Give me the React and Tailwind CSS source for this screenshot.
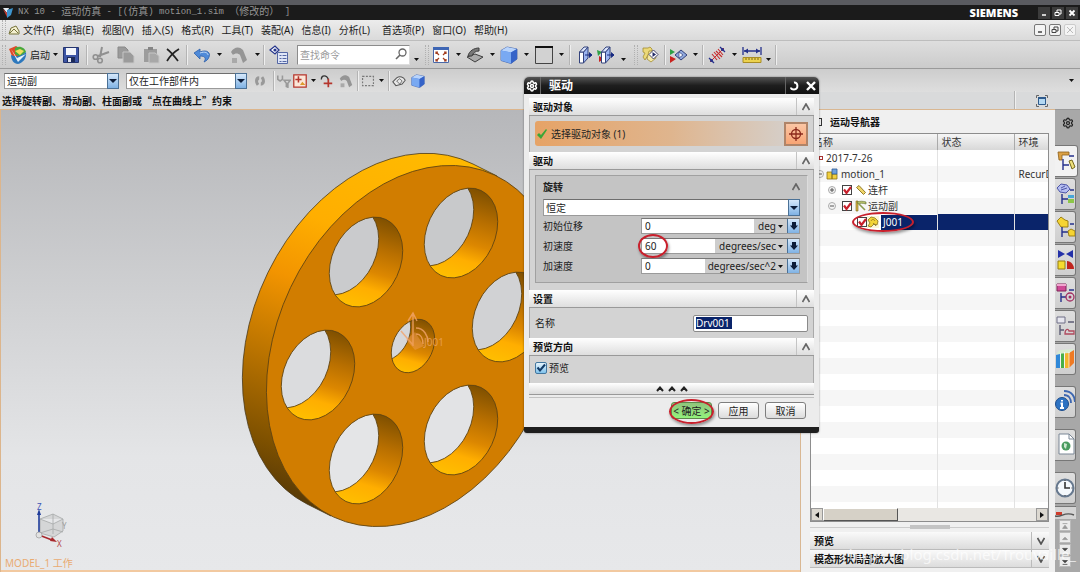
import React from "react";
import { Settings } from "lucide-react";

const MENUS = ["文件(F)", "编辑(E)", "视图(V)", "插入(S)", "格式(R)", "工具(T)", "装配(A)", "信息(I)", "分析(L)", "首选项(P)", "窗口(O)", "帮助(H)"];

/* ---------- small shared pieces ---------- */

function Svg({ size = "h-[18px] w-[18px]", box = "0 0 18 18", children }) {
  return (
    <svg className={`shrink-0 ${size}`} viewBox={box} fill="none" aria-hidden="true">
      {children}
    </svg>
  );
}

function Tool({ label, className = "", children }) {
  return (
    <button type="button" aria-label={label} className={`flex shrink-0 items-center justify-center ${className}`}>
      {children}
    </button>
  );
}

function Caret({ className = "" }) {
  return (
    <Svg size={`h-[3px] w-[5px] ${className}`} box="0 0 5 3">
      <path d="M0 0h5L2.500 3z" fill="#111" />
    </Svg>
  );
}

const Sep = ({ className = "" }) => <span className={`h-5 w-0.5 shrink-0 border-l border-[#b4b4b4] bg-[#efefef] ${className}`} />;
const Grip = ({ className = "" }) => <span className={`h-5 w-1 shrink-0 border-x border-dotted border-[#b0b0b0] ${className}`} />;

function Combo({ label, value, className = "", height = "h-4" }) {
  return (
    <div className={`relative shrink-0 ${height} ${className}`}>
      <select aria-label={label} className={`block w-full appearance-none border border-[#9a9a9a] border-t-[#6e6e6e] bg-white px-0.5 text-[10px] leading-none text-[#222] ${height}`}>
        <option>{value}</option>
      </select>
      <span className="pointer-events-none absolute inset-y-0 right-0 flex w-3 items-center justify-center border border-[#4b7196] bg-gradient-to-b from-[#d6e8fa] to-[#7fb2e4]">
        <svg className="h-1 w-2" viewBox="0 0 8 4">
          <path d="M0 0h8L4 4z" fill="#0c1c38" />
        </svg>
      </span>
    </div>
  );
}

function Ring({ className }) {
  return <span className={`pointer-events-none absolute rounded-[50%] border-2 border-[#c8202c] shadow-[1px_2px_3px_rgba(0,0,0,0.4)] ${className}`} />;
}

/* ---------- icons ---------- */

const Cube = ({ size }) => (
  <Svg size={size}>
    <path d="M1 4.500 7 1l10 2v10l-6 4.500-10-3z" fill="#4b7fe0" stroke="#2c4f9e" strokeWidth=".7" />
    <path d="M1 4.500 7 1l10 2-6 3.500z" fill="#b9d4fb" />
    <path d="M1 4.500 11 6.500v11l-10-3z" fill="#79a9f2" />
    <path d="M11 6.500 17 3v10l-6 4.500z" fill="#3563c8" />
  </Svg>
);

const Doc = ({ tint = "#9b9b9b" }) => (
  <Svg>
    <path d="M1 1h7l3 3v8H1z" fill={tint} stroke="#8a8a8a" />
    <path d="M6 6h7l4 4v7H6z" fill={tint} stroke="#c6c6c6" />
  </Svg>
);

const Start = () => (
  <Svg size="h-5 w-5" box="0 0 20 20">
    <path d="M1 4 8 1l5 3-3 10-6-3z" fill="#e04a28" />
    <path d="M7 3c5-3 10 0 11 4l-6 5-5-3z" fill="#49a83c" />
    <path d="M3 10c5 2 9 2 15-3 1 6-3 11-8 12-4 0-7-4-7-9z" fill="#2d78bd" />
    <path d="M3 4 9 13l9-4-8 8z" fill="#fff" opacity=".9" />
    <path d="M7 6l5 4 4-4-4-2z" fill="#f1dd5a" />
  </Svg>
);

const Save = () => (
  <Svg>
    <path d="M1.500 1.500h15v15h-15z" fill="#3c54a4" stroke="#25356f" />
    <path d="M4 2h10v7H4z" fill="#f4f6fb" />
    <path d="M5 11h8v5H5z" fill="#1d2a58" />
    <path d="M6 12h3v4H6z" fill="#e2e6f1" />
  </Svg>
);

const Scissors = () => (
  <Svg>
    <path d="M10 1 8 11M17 6 6 10" stroke="#909090" strokeWidth="2" />
    <circle cx="3.500" cy="11" r="2.300" stroke="#909090" strokeWidth="1.600" />
    <circle cx="8" cy="14.500" r="2.300" stroke="#909090" strokeWidth="1.600" />
  </Svg>
);

const Paste = () => (
  <Svg>
    <path d="M2 3h13v13H2z" fill="#9c9c9c" />
    <path d="M6 1h5v3H6z" fill="#858585" />
    <path d="M7 7h6l4 3v7H7z" fill="#a8a8a8" stroke="#c6c6c6" />
  </Svg>
);

const Undo = () => (
  <Svg>
    <path d="M1 7 7 3v3c7-3 11 1 9 5-1 3-3 4-5 5 2-3 2-6-4-6v3z" fill="#4f8ad8" stroke="#2e5fa8" strokeWidth=".8" />
    <path d="M7 7c5-2 8 0 8 2" stroke="#c4dcf8" />
  </Svg>
);

const Hook = ({ size }) => (
  <Svg size={size}>
    <path d="M1 6C4 1 9 0 13 4l4 10-4 3-3-8C8 7 5 7 3 9z" fill="#959595" />
    <path d="M2 12h5v5H2z" fill="#a9a9a9" />
  </Svg>
);

const FindDoc = () => (
  <Svg size="h-5 w-5" box="0 0 20 20">
    <path d="M1 5 6 1l4 4-4 4z" fill="#fff" stroke="#26368c" strokeWidth="1.300" />
    <circle cx="6" cy="5" r="1.600" fill="#26368c" />
    <path d="M8.500 7.500h10v11h-10z" fill="#dfe6f7" stroke="#5467a4" />
    <path d="M10.500 10.500h2m1 0h4m-7 3h2m1 0h4m-7 3h2m1 0h4" stroke="#5467a4" />
  </Svg>
);

const Fit = () => (
  <Svg>
    <path d="M1.500 1.500h15v15h-15z" fill="#fff" stroke="#4a68a8" />
    <path d="M1 1h16v3H1z" fill="#3e66b4" />
    <path d="m4 6 3 3m7-3-3 3m-7 6 3-3m7 3-3-3M4 8V6h2m6 0h2v2M4 13v2h2m6 0h2v-2" stroke="#a23c1e" strokeWidth="1.200" />
  </Svg>
);

const Clamp = () => (
  <Svg>
    <path d="M1 11 9 8l8 3-8 5z" fill="#aaa" stroke="#3e3e3e" />
    <path d="M2 10C3 5 8 2 13 2v3c-4 0-6 2-7 5z" fill="#777" stroke="#3e3e3e" />
  </Svg>
);

const Section = ({ marked }) => (
  <Svg>
    {marked && <path d="M0 4l5 2-4 4z" fill="#2fa046" />}
    {marked && <path d="M2 10l5 3-5 3z" fill="#c9231f" />}
    <path d="M4.500 6h4v11h-4z" fill="#fff" stroke="#33427c" />
    <path d="M8.500 6 13 1v11l-4.500 5z" fill="#9cb5f0" stroke="#33427c" />
    <path d="M4.500 6 9 1h4L8.500 6z" fill="#dbe5fb" stroke="#33427c" />
    <path d="M10 9h6m-2-2.500L17 9l-3 2.500" fill="#182a82" stroke="#182a82" />
  </Svg>
);

const GearPlay = () => (
  <Svg>
    <path d="M2 2h5l2-1 2 2v3l-4 3-3 5-2-3 2-4-2-1z" fill="#ecd978" stroke="#a38e34" strokeWidth=".8" />
    <path d="M8 5h5l2 7-5 4-4-3z" fill="#f5e9a4" stroke="#a38e34" strokeWidth=".8" />
    <path d="m12.500 4 4.500 4.500-4.500 4.500L8 8.500z" fill="#fff" stroke="#44446a" />
    <path d="M11.500 6v5l3.500-2.500z" fill="#222a66" />
  </Svg>
);

const PlayPair = () => (
  <Svg>
    <path d="m1 3 5 3-5 3z" fill="#2fa046" />
    <path d="m1 10 6 3-6 4z" fill="#c9231f" />
    <path d="m6 9 6-5 6 5-6 5z" fill="#8fa8dd" stroke="#34417a" />
    <path d="m10 6 4 3-4 3z" fill="#fff" stroke="#34417a" strokeWidth=".7" />
  </Svg>
);

const Spring = () => (
  <Svg>
    <path d="M2 16 16 2" stroke="#c92c2c" />
    <path d="m4 8 5 6M6 6l6 7M8 5l6 6m-4-8 5 6" stroke="#c92c2c" strokeWidth="1.100" />
    <path d="M1 12l5 5m6-16 5 5" stroke="#25318c" strokeWidth="1.300" />
    <circle cx="3.500" cy="14.500" r="1.500" fill="#25318c" />
    <circle cx="14.500" cy="3.500" r="1.500" fill="#25318c" />
  </Svg>
);

const Ruler = () => (
  <Svg size="h-[18px] w-5" box="0 0 20 18">
    <path d="M1 1v8M19 1v8M2 5h16" stroke="#25318c" strokeWidth="1.300" />
    <path d="m2 5 4-2.500v5zM18 5l-4-2.500v5z" fill="#25318c" />
    <path d="M1 11.500h18v5H1z" fill="#ecd24e" stroke="#a98d25" />
    <path d="M4 12v2m3-2v2m3-2v2m3-2v2m3-2v2" stroke="#7c661a" />
  </Svg>
);

const Joint = () => (
  <Svg size="h-3 w-3" box="0 0 12 12">
    <path d="M1 1h2v10H1z" fill="#d8b648" stroke="#7a6418" strokeWidth=".6" />
    <path d="M2 2c3-1 6-1 9 0v2C8 3 5 3 3 4z" fill="#b9c46a" stroke="#5a6a2c" strokeWidth=".6" />
    <path d="m4 4 6 6" stroke="#8a9a50" strokeWidth="1.600" />
  </Svg>
);

const Link = () => (
  <Svg size="h-3 w-3" box="0 0 12 12">
    <path d="M1.500 3.500 4 1.500l6.500 7-2 2z" fill="#f0d66a" stroke="#8a7220" strokeWidth=".9" />
  </Svg>
);

const YellowGear = () => (
  <Svg size="h-3 w-3" box="0 0 12 12">
    <path d="M0 0h12v12H0z" fill="#fbf6d6" />
    <path d="M1 4 4 1l4 1 3 3-1 4-3-1-3 3-3-1 2-3z" fill="#f2d437" stroke="#8a7220" strokeWidth=".8" />
    <path d="M4 5c1-2 3-2 4 0M6 7l3 3" stroke="#8a7220" strokeWidth=".8" />
  </Svg>
);

/* ---------- top bars ---------- */

function TitleBar() {
  return (
    <header className="shrink-0 border-t-[5px] border-[#5a5b60] bg-[#1b1b1b]">
      <div className="flex h-[15px] items-center pl-0.5 pr-0.5">
        <Svg size="h-3 w-3" box="0 0 12 12">
          <path d="M1 1h6l-2 5z" fill="#e8eef4" />
          <path d="M5 3 11 1 9 8 5 11z" fill="#3d95cf" />
          <path d="m1 2 4 4v4z" fill="#cc3b32" />
        </Svg>
        <h1 className="ml-1 flex items-center whitespace-pre font-['Liberation_Mono','Noto_Sans_CJK_SC',monospace] text-[9px] leading-none text-[#959595]">
          NX 10 - <span className="text-[10px]">运动仿真</span> - [(<span className="text-[10px]">仿真</span>) motion_1.sim <span className="text-[10px]">（修改的）</span> ]
        </h1>
        <span className="ml-auto mr-5 font-['Open_Sans',sans-serif] text-[11px] font-extrabold leading-none text-white">SIEMENS</span>
        <div className="flex gap-0.5 text-white">
          <Tool label="最小化" className="h-3 w-3 bg-[#3c3c3c]">
            <Svg size="h-2 w-2" box="0 0 8 8"><path d="M2 6h4" stroke="#fff" strokeWidth="1.500" /></Svg>
          </Tool>
          <Tool label="还原" className="h-3 w-3 bg-[#3c3c3c]">
            <Svg size="h-2 w-2" box="0 0 8 8"><path d="M3 3V1h4v4H5M1 3.500h4v3H1z" stroke="#fff" /></Svg>
          </Tool>
          <Tool label="关闭" className="h-3 w-3 bg-[#3c3c3c]">
            <Svg size="h-2 w-2" box="0 0 8 8"><path d="m1.500 1.500 5 5m0-5-5 5" stroke="#fff" strokeWidth="1.800" /></Svg>
          </Tool>
        </div>
      </div>
    </header>
  );
}

function MenuBar() {
  const frame = "h-3 w-3 rounded-[2px] border bg-[#f4f4f4]";
  return (
    <nav className="flex h-[21px] shrink-0 items-center border-b border-[#bdbdbd] bg-gradient-to-b from-[#ececec] to-[#dadada] pl-0.5 pr-1">
      <Grip className="mr-0.5 h-4" />
      <Svg size="h-3 w-3" box="0 0 12 12">
        <path d="M1 10 3 4l5-2 3 5v3z" fill="#f3efcf" stroke="#77743c" />
        <path d="m2 9 4-4 4 4" stroke="#77743c" />
      </Svg>
      <ul className="ml-[3px] flex gap-2 text-[10px] leading-none text-[#1c1c1c]">
        {MENUS.map((m) => (
          <li key={m} className={m === "首选项(P)" ? "ml-1" : ""}>
            <button type="button">{m}</button>
          </li>
        ))}
      </ul>
      <div className="ml-auto flex gap-[3px]">
        <Tool label="最小化窗口" className={`${frame} border-[#777]`}>
          <Svg size="h-2 w-2" box="0 0 8 8"><path d="M2 6h4" stroke="#444" strokeWidth="1.500" /></Svg>
        </Tool>
        <Tool label="还原窗口" className={`${frame} border-[#777]`}>
          <Svg size="h-2 w-2" box="0 0 8 8"><path d="M3 3V1h4v4H5M1 3.500h4v3H1z" stroke="#444" /></Svg>
        </Tool>
        <Tool label="关闭窗口" className={`${frame} border-[#ccc]`}>
          <Svg size="h-2 w-2" box="0 0 8 8"><path d="m1 1 6 6m0-6-6 6" stroke="#bbb" /></Svg>
        </Tool>
      </div>
    </nav>
  );
}

function MainToolbar() {
  return (
    <div className="flex h-7 shrink-0 items-center border-b border-[#9a9a9a] bg-gradient-to-b from-[#dedede] to-[#cbcbcb] pl-0.5">
      <Grip />
      <button type="button" className="ml-0.5 flex items-center text-[10px] leading-none text-[#222]">
        <Start />
        <span className="ml-0.5">启动</span>
        <Caret className="ml-[3px]" />
      </button>
      <Tool label="保存" className="ml-1"><Save /></Tool>
      <Sep className="ml-[6px]" />
      <Tool label="剪切" className="ml-1"><Scissors /></Tool>
      <Tool label="复制" className="ml-[7px]"><Doc /></Tool>
      <Tool label="粘贴" className="ml-[7px]"><Paste /></Tool>
      <Tool label="删除" className="ml-1">
        <Svg><path d="M3 3c4 3 8 8 11 12M15 3C10 6 6 10 3 15" stroke="#222" strokeWidth="1.700" /></Svg>
      </Tool>
      <Sep className="ml-[4px]" />
      <Tool label="撤消" className="ml-[5px]"><Undo /></Tool>
      <Caret className="ml-[6px]" />
      <Tool label="重做" className="ml-2"><Hook /></Tool>
      <Caret className="ml-[7px]" />
      <Sep className="ml-[3px]" />
      <Tool label="命令查找器" className="ml-1"><FindDoc /></Tool>
      <div className="relative ml-2 w-[113px] shrink-0">
        <input aria-label="查找命令" placeholder="查找命令" className="block h-5 w-full border border-[#8c8c8c] border-r-[#ddd] border-b-[#ddd] bg-white px-0.5 text-[10px] text-[#333] placeholder:text-[#9a9a9a]" />
        <span className="pointer-events-none absolute right-[3px] top-[3px]">
          <Svg size="h-3 w-3" box="0 0 12 12">
            <circle cx="7.500" cy="4.500" r="3.500" stroke="#666" strokeWidth="1.300" />
            <path d="m5 7-4 4" stroke="#666" strokeWidth="1.600" />
          </Svg>
        </span>
      </div>
      <Caret className="ml-1 mt-2.5" />
      <Grip className="ml-[6px]" />
      <Tool label="适合窗口" className="ml-[3px]"><Fit /></Tool>
      <Caret className="ml-[6px]" />
      <Tool label="渲染样式" className="ml-[5px]"><Clamp /></Tool>
      <Caret className="ml-[6px]" />
      <Tool label="着色" className="ml-[5px]"><Cube /></Tool>
      <Caret className="ml-[6px]" />
      <Tool label="背景" className="ml-[5px]">
        <Svg size="h-5 w-5" box="0 0 20 20">
          <path d="M1.500 2.500h17v16h-17z" fill="#d2d2d2" stroke="#444" />
          <path d="M1 1h18v2H1z" fill="#111" />
        </Svg>
      </Tool>
      <Caret className="ml-[5px]" />
      <Sep className="ml-[5px]" />
      <Tool label="剪切截面" className="ml-[4px]"><Section /></Tool>
      <Tool label="编辑截面" className="ml-1"><Section marked /></Tool>
      <Caret className="ml-[6px] mt-2.5" />
      <Grip className="ml-2" />
      <Tool label="解算" className="ml-[3px]"><GearPlay /></Tool>
      <Sep className="ml-[5px]" />
      <Tool label="动画" className="ml-[3px]"><PlayPair /></Tool>
      <Caret className="ml-[6px]" />
      <Sep className="ml-[4px]" />
      <Tool label="弹簧" className="ml-[4px]"><Spring /></Tool>
      <Caret className="ml-[6px]" />
      <Tool label="测量" className="ml-[5px]"><Ruler /></Tool>
      <Caret className="ml-[4px] mt-2.5" />
      <Sep className="ml-[4px]" />
    </div>
  );
}

function SelectionBar() {
  const mini = "h-[14px] w-[14px]";
  return (
    <div className="flex h-[23px] shrink-0 items-center bg-gradient-to-b from-[#cdcdcd] to-[#dedede] pl-1 pr-1.5">
      <Combo label="类型过滤器" value="运动副" className="w-[115px]" />
      <Combo label="选择范围" value="仅在工作部件内" className="ml-[7px] w-[121px]" />
      <Tool label="刷新" className="ml-[6px]">
        <Svg size={mini}>
          <path d="M8 3C2 3 1 10 5 15l3-2c-2-3-2-5 0-6zM10 15c6 0 7-7 3-12l-3 2c2 3 2 5 0 6z" fill="#999" />
        </Svg>
      </Tool>
      <Sep className="ml-[6px]" />
      <Tool label="过滤" className="ml-0.5">
        <Svg size={mini}>
          <path d="M1 2v5l3 2 3-2V2M9 8h8l-3 4v5l-2-1v-4z" stroke="#999" strokeWidth="2" />
        </Svg>
      </Tool>
      <Tool label="捕捉点" className="ml-0.5">
        <Svg size={mini}>
          <path d="M1 1h16v16H1z" fill="#fbe6d8" stroke="#b5352c" strokeWidth="1.600" />
          <path d="M7 3v8M3 7h8" stroke="#b5352c" strokeWidth="2" />
          <path d="m9 14 3-4 4 4z" fill="#dd9b2c" />
        </Svg>
      </Tool>
      <Caret className="ml-1" />
      <Tool label="移动" className="ml-[3px]">
        <Svg size={mini}>
          <path d="M3 7c0-6 7-6 9 0" stroke="#333" strokeWidth="1.700" />
          <path d="M12 6v11M6 12h11" stroke="#b5352c" strokeWidth="2.200" />
        </Svg>
      </Tool>
      <Tool label="取消" className="ml-[6px]"><Hook size={mini} /></Tool>
      <Sep className="ml-[4px]" />
      <Tool label="矩形选择" className="ml-0.5">
        <Svg size={mini}><path d="M2 3h14v12H2z" stroke="#777" strokeWidth="1.500" strokeDasharray="2.500 1.800" /></Svg>
      </Tool>
      <Caret className="ml-[4px]" />
      <Sep className="ml-[4px]" />
      <Tool label="实体" className="ml-0.5">
        <Svg size={mini}>
          <path d="M1 10 6 5c4-3 9-1 11 3l-4 5-8 2z" fill="#e8e8e8" stroke="#555" strokeWidth="1.300" />
          <path d="m6 9 4-3 3 3-3 4z" stroke="#555" />
        </Svg>
      </Tool>
      <Tool label="面" className="ml-[5px]"><Cube size={mini} /></Tool>
      <Caret className="ml-auto" />
    </div>
  );
}

function CueLine() {
  return (
    <div className="flex h-[17px] shrink-0 items-center bg-[#d9dadb] pl-0.5 text-[#111]">
      <p className="font-['Noto_Sans_CJK_SC',sans-serif] text-[10px] font-bold leading-none">选择旋转副、滑动副、柱面副或“点在曲线上”约束</p>
      <Sep className="ml-auto mr-5 h-4" />
      <Tool label="全屏" className="mr-8">
        <Svg size="h-3 w-3" box="0 0 12 12">
          <path d="M.5 3V.5H3M9 .5h2.500V3m0 6v2.500H9m-6 0H.5V9" stroke="#666" />
          <path d="M2.500 2.500h7v7h-7z" fill="#b4d8f2" stroke="#2e5a8c" />
          <path d="M2 2h8v2H2z" fill="#2e5a8c" />
        </Svg>
      </Tool>
    </div>
  );
}

/* ---------- model view ---------- */

// back is the colour seen through each hole
const HOLES = [
  { x: 365, y: 262, rx: 34, ry: 47, back: "#cacbcd" },
  { x: 460, y: 233, rx: 34, ry: 47, back: "#c8c9cb" },
  { x: 508, y: 317, rx: 34, ry: 47, back: "#d1d2d4" },
  { x: 460, y: 430, rx: 34, ry: 47, back: "#e2e3e5" },
  { x: 365, y: 459, rx: 34, ry: 47, back: "#e4e5e7" },
  { x: 317, y: 375, rx: 34, ry: 47, back: "#dbdcde" },
  { x: 412, y: 346, rx: 20, ry: 28, back: "#d6d7d9" },
];

function Wheel() {
  return (
    <svg className="block h-full w-full" role="img" aria-label="motion_1">
      <defs>
        <linearGradient id="sky" gradientUnits="userSpaceOnUse" x1="0" y1="110" x2="0" y2="572">
          <stop offset="0" stopColor="#b6b7ba" />
          <stop offset=".45" stopColor="#d2d3d5" />
          <stop offset=".75" stopColor="#e4e5e7" />
          <stop offset="1" stopColor="#e7e8ea" />
        </linearGradient>
        <linearGradient id="rim" gradientUnits="userSpaceOnUse" x1="420" y1="155" x2="290" y2="512">
          <stop offset="0" stopColor="#ffb900" />
          <stop offset=".25" stopColor="#ffae00" />
          <stop offset=".42" stopColor="#f29400" />
          <stop offset=".62" stopColor="#bd7500" />
          <stop offset=".85" stopColor="#7d5000" />
          <stop offset="1" stopColor="#4e3408" />
        </linearGradient>
        <linearGradient id="bore" x1=".7" y1="0" x2=".45" y2="1">
          <stop offset="0" stopColor="#7a4d00" />
          <stop offset=".35" stopColor="#b86f00" />
          <stop offset=".6" stopColor="#dc8700" />
          <stop offset=".78" stopColor="#ffae00" />
          <stop offset="1" stopColor="#ffbe00" />
        </linearGradient>
        {HOLES.map((h, i) => (
          <clipPath id={`hole${i}`} key={i}>
            <ellipse cx={h.x} cy={h.y} rx={h.rx} ry={h.ry} transform={`rotate(25.3 ${h.x} ${h.y})`} />
          </clipPath>
        ))}
      </defs>
      <g transform="translate(0 -110)" strokeWidth=".8">
        <rect y="110" width="100%" height="100%" fill="url(#sky)" />
        <path d="M496 176 472 164A136.600 189 25.300 0 0 306 504L330 516Z" fill="url(#rim)" stroke="#4a3a1c" />
        <ellipse cx="413" cy="346" rx="136.600" ry="189" transform="rotate(25.3 413 346)" fill="#d17d00" stroke="#5e4312" />
        {HOLES.map((h, i) => (
          <g key={i}>
            <g clipPath={`url(#hole${i})`}>
              <rect x={h.x - h.rx - 5} y={h.y - h.ry} width={h.rx * 2 + 10} height={h.ry * 2} fill="url(#bore)" />
              <ellipse cx={h.x - 24} cy={h.y - 12} rx={h.rx} ry={h.ry} transform={`rotate(25.3 ${h.x - 24} ${h.y - 12})`} fill={h.back} stroke="#5e4312" />
            </g>
            <ellipse cx={h.x} cy={h.y} rx={h.rx} ry={h.ry} transform={`rotate(25.3 ${h.x} ${h.y})`} fill="none" stroke="#5e4312" />
          </g>
        ))}
        <g stroke="#f3a56c" strokeWidth="1.500" fill="none" opacity=".8">
          <path d="m407 321 5-8 4 8M412 314v32M400 331l12 14M415 328c8 0 12 8 12 14M415 334c5 0 7 5 7 10" />
          <path d="M405 340l9-8 9 14-9 4z" fill="#f7a468" fillOpacity=".5" stroke="none" />
        </g>
        <text x="423" y="346" fontSize="10" fill="#eda565" opacity=".8">J001</text>
      </g>
    </svg>
  );
}

function ModelView() {
  return (
    <main className="relative min-w-0 flex-1 border-l border-t border-[#dcb58c]">
      <Wheel />
      <div className="absolute bottom-0 left-0 w-full border-b-2 border-[#f2c9a0] pl-1">
        <svg className="mb-1 ml-6 h-[52px] w-11" viewBox="0 0 44 52" aria-hidden="true">
          <path d="m11 19 13-5 10 5v12l-9 6-14-4zM11 19l13 5 10-5M24 14v20M11 33l13-4 10 3" fill="#c9cbcb" fillOpacity=".6" stroke="#a6a8a8" strokeWidth=".8" />
          <path d="M10 35V14" stroke="#1f3c9a" strokeWidth="1.600" />
          <path d="m8 15 2-6 2 6z" fill="#1f3c9a" />
          <path d="m10 35 13 5" stroke="#a8282c" strokeWidth="1.600" />
          <path d="m28 42-7-1 2-4z" fill="#a8282c" />
          <circle cx="10" cy="35" r="3" fill="#e2e2e2" stroke="#999" strokeWidth=".7" />
          <text x="8" y="10" fontSize="8" fill="#3f55b5">Z</text>
          <text x="28" y="47" fontSize="8" fill="#b5484c">X</text>
          <text x="33" y="29" fontSize="8" fill="#9c9e9e">Y</text>
        </svg>
        <p className="text-[10px] leading-[14px] text-[#e9ab72]">MODEL_1 工作</p>
      </div>
    </main>
  );
}

/* ---------- motion navigator ---------- */

function Check() {
  return (
    <span className="relative flex shrink-0">
      <input type="checkbox" defaultChecked aria-label="激活" className="h-2.5 w-2.5 appearance-none border border-[#444] bg-white" />
      <svg className="pointer-events-none absolute inset-0 h-2.5 w-2.5" viewBox="0 0 10 10">
        <path d="M2 4.500 4.500 8 9 2" fill="none" stroke="#c8202c" strokeWidth="2.200" />
      </svg>
    </span>
  );
}

function Twisty({ open }) {
  return (
    <Svg size="h-2 w-2" box="0 0 8 8">
      <circle cx="4" cy="4" r="3.500" fill="#f4f4f4" stroke="#aaa" />
      <path d={open ? "M2 4h4" : "M2 4h4M4 2v4"} stroke="#555" />
    </Svg>
  );
}

function Navigator() {
  const cell = "border-r border-[#e2e2e2] p-0";
  return (
    <aside className="flex w-[255px] shrink-0 flex-col border-l border-t border-[#d9b792] bg-[#f0f0f0] pl-[9px] pr-[6px] text-[10px] leading-none text-[#333]">
      <h2 className="flex h-[23px] shrink-0 items-center gap-2 text-[#111]">
        <span className="h-2 w-3 border border-[#333]" />
        <span className="font-bold">运动导航器</span>
      </h2>
      <div className="flex min-h-0 flex-1 flex-col border border-[#8d8d8d]">
        <div className="min-h-0 flex-1 overflow-hidden bg-white">
          <table className="w-full table-fixed border-collapse">
            <thead>
              <tr className="h-4 bg-gradient-to-b from-[#f6f6f6] to-[#d8d8d8] text-left">
                <th className="w-[126px] border-r border-[#aaa] p-0 pl-0.5 font-normal">名称</th>
                <th className="border-r border-[#aaa] p-0 pl-1 font-normal">状态</th>
                <th className="w-[34px] p-0 pl-1 font-normal">环境</th>
              </tr>
            </thead>
            <tbody>
              <tr className="h-4">
                <td className={cell}>
                  <div className="flex items-center pl-2">
                    <span className="h-1 w-1 border border-[#a33]" />
                    <span className="ml-[3px]">2017-7-26</span>
                  </div>
                </td>
                <td className={cell} />
                <td className="p-0" />
              </tr>
              <tr className="h-4 bg-[#f6f6f6]">
                <td className={cell}>
                  <div className="flex items-center pl-[5px]">
                    <Twisty open />
                    <Svg size="ml-0.5 h-3 w-3" box="0 0 12 12">
                      <path d="M1 4h5v7H1zM6 6h5v5H6z" fill="#f0cf3f" stroke="#8d7415" strokeWidth=".8" />
                      <path d="M6 1h5v5H6z" fill="#6da0dc" stroke="#2d5c94" strokeWidth=".8" />
                    </Svg>
                    <span className="ml-[3px]">motion_1</span>
                  </div>
                </td>
                <td className={cell} />
                <td className="overflow-hidden whitespace-nowrap p-0 pl-1">RecurD</td>
              </tr>
              <tr className="h-4">
                <td className={cell}>
                  <div className="flex items-center pl-[17px]">
                    <Twisty />
                    <span className="ml-[6px] mr-[3px] flex"><Check /></span>
                    <Link />
                    <span className="ml-px">连杆</span>
                  </div>
                </td>
                <td className={cell} />
                <td className="p-0" />
              </tr>
              <tr className="h-4 bg-[#f6f6f6]">
                <td className={cell}>
                  <div className="flex items-center pl-[17px]">
                    <Twisty open />
                    <span className="ml-[6px] mr-[3px] flex"><Check /></span>
                    <Joint />
                    <span className="ml-px">运动副</span>
                  </div>
                </td>
                <td className={cell} />
                <td className="p-0" />
              </tr>
              <tr className="h-4">
                <td className={cell}>
                  <div className="relative flex items-center pl-[46px]">
                    <Check />
                    <YellowGear />
                    <span className="ml-0.5 flex h-[15px] flex-1 items-center bg-[#0a246a] pl-0.5 text-white">J001</span>
                    <Ring className="-top-[3px] left-[41px] h-5 w-[62px]" />
                  </div>
                </td>
                <td className={`${cell} bg-[#0a246a]`} />
                <td className="bg-[#0a246a] p-0" />
              </tr>
              {Array.from({ length: 18 }, (_, i) => (
                <tr key={i} className="h-4 odd:bg-white even:bg-[#f6f6f6]">
                  <td className={cell} />
                  <td className={cell} />
                  <td className="p-0" />
                </tr>
              ))}
            </tbody>
          </table>
        </div>
        <div className="flex h-[13px] shrink-0 bg-[#e9e7e3]">
          <Tool label="向左滚动" className="w-3 border border-[#999] bg-[#dcd8d0]">
            <Svg size="h-1.5 w-1" box="0 0 4 6"><path d="M4 0v6L0 3z" fill="#111" /></Svg>
          </Tool>
          <span className="w-[75px] border border-[#fff] border-b-[#555] border-r-[#555] bg-[#d6d1c7]" />
          <Tool label="向右滚动" className="ml-auto w-3 border border-[#999] bg-[#dcd8d0]">
            <Svg size="h-1.5 w-1" box="0 0 4 6"><path d="M0 0v6l4-3z" fill="#111" /></Svg>
          </Tool>
        </div>
      </div>
      <div className="flex h-[10px] shrink-0 items-center">
        <span className="h-px flex-1 bg-[#ccc]" />
        <span className="h-1 w-10 bg-[#c4c4c4]" />
        <span className="h-px flex-1 bg-[#ccc]" />
      </div>
      {["预览", "模态形状局部放大图"].map((t) => (
        <button key={t} type="button" className="flex h-[18px] shrink-0 items-center border-b border-[#bbb] bg-gradient-to-b from-[#fafafa] to-[#dcdcdc] pl-1 text-left font-bold text-[#111]">
          <span className="flex-1">{t}</span>
          <span className="flex h-full w-[18px] items-center justify-center border-l border-[#bbb]">
            <Svg size="h-2 w-2" box="0 0 8 8"><path d="m.5 1 3.500 6L7.500 1" stroke="#555" strokeWidth="1.700" /></Svg>
          </span>
        </button>
      ))}
      <div className="h-1 shrink-0" />
    </aside>
  );
}

const TABS = [
  {
    label: "运动导航器",
    art: <><path d="M2 3h11v3H6v5H3z" fill="#dba145" stroke="#8c5e1c" strokeWidth=".8" /><path d="M7 10v11m0-5h6M13 7h5" stroke="#25318c" strokeWidth="1.400" /><path d="m13 12 3-1 3 7-3 2z" fill="#efe07a" stroke="#74671c" /></>,
  },
  {
    label: "装配导航器",
    art: <><path d="m2 6 4-4 6 1 3 4-4 4-6-1z" fill="#b5bdf0" stroke="#4d56a8" /><path d="m6 6 4-2m-4 4 6-2" stroke="#4d56a8" /><path d="M7 12v10m0-5h6m2-9h4" stroke="#25318c" strokeWidth="1.400" /><path d="M13 13h6v3h-6z" fill="#48a6d8" /><path d="M13 17h6v4h-6z" fill="#8cc648" /></>,
  },
  {
    label: "约束导航器",
    art: <><path d="M2 6 6 2l4 3 3 1v6H6z" fill="#f5d433" stroke="#9d8115" /><path d="M7 12v10m0-5h6m2-8h4" stroke="#25318c" strokeWidth="1.400" /><path d="m13 16 3-2 4 2v5h-6z" fill="#f5d433" stroke="#9d8115" /></>,
  },
  {
    label: "部件导航器",
    art: <><path d="M3 2v8l7-4zM18 2v8l-7-4z" fill="#2330a8" /><path d="M3 13h7v8H3z" fill="#f5dc2f" stroke="#967c12" /><path d="M12 13c4 0 7 4 7 8h-7z" fill="#c0241e" /></>,
  },
  {
    label: "重用库",
    art: <><path d="M2 3h9v7H2z" fill="#cf4a96" stroke="#802458" /><path d="M2 3h9v2H2z" fill="#f0a6cf" /><path d="M6 12v9m0-5h5m3-7h5" stroke="#25318c" strokeWidth="1.400" /><circle cx="15" cy="16" r="4" stroke="#a22f62" strokeWidth="1.300" /><circle cx="15" cy="16" r="1.500" fill="#a22f62" /></>,
  },
  {
    label: "视图管理器",
    art: <><path d="M2 3h8v6H2z" fill="#e6e6ee" stroke="#6e6e86" /><path d="M5 11v10m0-5h4m4-8h6" stroke="#5c5c74" strokeWidth="1.400" /><path d="M10 20c0-5 3-6 4-3h5v3z" stroke="#b04a5e" strokeWidth="1.300" /></>,
  },
  {
    label: "库",
    art: <><path d="m1 8 4-1v14H1z" fill="#3088d8" /><path d="m6 6 3-1v16H6z" fill="#49b045" /><path d="m10 6 4-1v16h-4z" fill="#f1b42c" /><path d="m14 6 5-3v13l-5 5z" fill="#ef7a24" /><path d="m1 7 4-4 14-1-5 4z" fill="#d8ecd0" /><path d="M5.500 6v15m4-16v16M14 5v16" stroke="#fff" strokeWidth=".7" /></>,
  },
  {
    label: "互联网",
    gap: true,
    art: <><circle cx="7" cy="14" r="6.500" fill="#2d72c2" stroke="#1b4c8c" /><path d="M7 10v1.500M5.500 13.500H7V18m-2 0h4" stroke="#fff" strokeWidth="2" /><path d="M9 5c5 0 7 4 7 8M9 1c8 0 11 6 11 11" stroke="#3c66b0" strokeWidth="1.800" /></>,
  },
  {
    label: "历史页面",
    gap: true,
    art: <><path d="M4 1h10l5 5v15H4z" fill="#fff" stroke="#7b8796" /><path d="M14 1v5h5" stroke="#7b8796" /><circle cx="11" cy="13" r="4.500" fill="#4b9c60" /><path d="m9 10 3 1-1 5-2-2z" fill="#cde8d0" /></>,
  },
  {
    label: "历史记录",
    gap: true,
    art: <><circle cx="10" cy="12" r="8.500" fill="#f4f8fc" stroke="#66788e" strokeWidth="2" /><path d="M10 6v6h5" stroke="#333" strokeWidth="1.600" /><path d="M10 4v1m0 14v1M2.500 12h1m13 0h1" stroke="#333" /></>,
  },
];

function ResourceBar() {
  return (
    <div className="flex w-[25px] shrink-0 flex-col items-start overflow-hidden border-t border-[#999] bg-[#a8a8a8]">
      <Tool label="选项" className="mb-2 h-[26px] w-full"><Settings className="h-3 w-3 text-[#222]" strokeWidth={2.5} /></Tool>
      {TABS.map((t, i) => (
        <button
          key={t.label}
          type="button"
          aria-label={t.label}
          className={`flex h-8 shrink-0 items-center justify-center rounded-r-[3px] border border-l-0 border-[#777] ${t.gap ? "mt-[11px]" : "mt-px"} ${i === 0 ? "w-[23px] bg-[#f2f2f2]" : "w-[21px] bg-gradient-to-b from-[#dedede] to-[#cfcfcf]"}`}
        >
          <Svg size="h-6 w-5" box="0 0 20 24">{t.art}</Svg>
        </button>
      ))}
      <button type="button" aria-label="角色" className="mt-0.5 h-[13px] w-[21px] shrink-0 border-t border-[#777] bg-[#d4d4d4]">
        <Svg size="h-3 w-5" box="0 0 20 12">
          <path d="M1 5h6v3H1z" fill="#cf3c2c" />
          <path d="M0 9c7 2 9-5 19-1" stroke="#555" strokeWidth="1.400" />
        </Svg>
      </button>
      <div className="ml-1 mt-px flex flex-col gap-px">
        {[
          ["第一页", "M2 2h6M2 8l3-4 3 4z", "#999"],
          ["上一页", "m2 7 3-3 3 3z", "#999"],
          ["下一页", "m2 3 3 3 3-3z", "#444"],
          ["最后一页", "m2 3 3 3 3-3zM2 8h6", "#444"],
        ].map(([label, d, c]) => (
          <Tool key={label} label={label} className="h-[11px] w-3 border border-[#bbb] bg-[#ececec]">
            <Svg size="h-2 w-2" box="0 0 10 10"><path d={d} fill={c} stroke={c} /></Svg>
          </Tool>
        ))}
      </div>
    </div>
  );
}

/* ---------- drive dialog ---------- */

const Chevron = () => (
  <Svg size="h-2 w-2" box="0 0 8 8"><path d="M.5 7 4 1l3.500 6" stroke="#666" strokeWidth="1.700" /></Svg>
);

function Group({ title, className = "", children }) {
  return (
    <section>
      <h3 className="flex h-[18px] items-center border-b border-[#999] bg-gradient-to-b from-white to-[#dedede] pl-1 font-bold text-[#111]">
        <span className="flex-1">{title}</span>
        <button type="button" aria-label={`折叠${title}`} className="flex h-full w-[18px] items-center justify-center border-l border-[#c4c4c4]">
          <Chevron />
        </button>
      </h3>
      <div className={`border-x border-[#aaa] bg-[#d3d3d3] px-[5px] ${className}`}>{children}</div>
    </section>
  );
}

function Quantity({ id, label, value, unit, unitWidth, ringed }) {
  return (
    <div className="flex h-[20px] items-center">
      <label htmlFor={id} className="flex-1">{label}</label>
      <div className="relative flex h-4 w-[159px] border border-[#9a9a9a] border-t-[#777]">
        <input id={id} defaultValue={value} className="min-w-0 flex-1 bg-white px-[3px]" />
        <button type="button" className={`flex items-center justify-end gap-0.5 bg-[#cdcdcd] pr-1 ${unitWidth}`}>
          {unit}
          <Caret />
        </button>
        <Tool label={`${label}选项`} className="w-3 border-l border-[#4b7196] bg-gradient-to-b from-[#d6e8fa] to-[#7fb2e4]">
          <Svg size="h-2 w-2" box="0 0 8 8"><path d="M2 0h4v3.500h2L4 8 0 3.500h2z" fill="#0c1c38" /></Svg>
        </Tool>
        {ringed && <Ring className="-left-1 -top-[5px] h-6 w-[30px]" />}
      </div>
    </div>
  );
}

function DriveDialog() {
  const action = "flex h-[17px] w-[41px] items-center justify-center rounded-[3px] border border-[#7e7e7e] bg-gradient-to-b from-white to-[#dcdcdc]";
  return (
    <div role="dialog" aria-label="驱动" className="absolute left-[524px] top-[77px] w-[295px] rounded-t-[5px] rounded-b-[3px] border-b-[6px] border-[#1e1e1e] bg-[#ececec] text-[10px] leading-none text-[#222] shadow-[0_0_2px_rgba(0,0,0,0.5)]">
      <div className="flex h-[17px] items-center rounded-t-[5px] bg-gradient-to-b from-[#555] via-[#1e1e1e] to-[#111] text-white">
        <Tool label="对话框选项" className="h-full w-[17px] border-r border-[#666]"><Settings className="h-3 w-3" strokeWidth={3} /></Tool>
        <h2 className="flex-1 pl-2 text-[12px] font-bold leading-none">驱动</h2>
        <Tool label="重置" className="h-full w-[17px] border-l border-[#666]">
          <Svg size="h-2.5 w-2.5" box="0 0 10 10"><path d="M5 1.500C9 1 10 8 5 8.500c-2 0-3-1-3-2" stroke="#fff" strokeWidth="2" /></Svg>
        </Tool>
        <Tool label="关闭" className="h-full w-[17px]">
          <Svg size="h-2.5 w-2.5" box="0 0 10 10"><path d="m1 1 8 8m0-8-8 8" stroke="#fff" strokeWidth="2.400" /></Svg>
        </Tool>
      </div>
      <div className="px-[5px] pt-[4px]">
        <Group title="驱动对象" className="h-[36px] pt-[5px]">
          <div className="flex h-[25px] items-center rounded-[3px] bg-gradient-to-r from-[#e6a366] via-[#dfb58e] to-[#d3d3d3] pl-px">
            <Svg size="h-3 w-3" box="0 0 12 12"><path d="m1 7 2-2 2 2 5-6 1 1-6 9z" fill="#3aa637" /></Svg>
            <span className="ml-[3px] flex-1">选择驱动对象 (1)</span>
            <Tool label="选择对象" className="h-[24px] w-[24px] border-2 border-[#b08468] bg-gradient-to-b from-[#fbc6a4] to-[#f7a474]">
              <Svg size="h-4 w-4" box="0 0 16 16">
                <circle cx="8" cy="8" r="4.500" stroke="#8b2a1c" strokeWidth="1.300" />
                <path d="M8 1v14M1 8h14" stroke="#8b2a1c" strokeWidth="1.300" />
              </Svg>
            </Tool>
          </div>
        </Group>
        <Group title="驱动" className="h-[120px] pt-[5px]">
          <div className="border border-[#a0a0a0] border-r-[#ddd] bg-[#c4c4c4] pb-1.5 pl-[7px] pr-[7px]">
            <div className="flex h-[21px] items-center justify-between font-bold">
              旋转
              <Tool label="折叠旋转"><Chevron /></Tool>
            </div>
            <Combo label="旋转类型" value="恒定" className="mt-0.5 w-full" height="h-[17px]" />
            <Quantity id="disp" label="初始位移" value="0" unit="deg" unitWidth="w-[33px]" />
            <Quantity id="velocity" label="初速度" value="60" unit="degrees/sec" unitWidth="w-[72px]" ringed />
            <Quantity id="accel" label="加速度" value="0" unit="degrees/sec^2" unitWidth="w-[82px]" />
          </div>
        </Group>
        <Group title="设置" className="flex h-[30px] items-center">
          <label htmlFor="drvname" className="flex-1">名称</label>
          <div className="flex h-[17px] w-[115px] items-center rounded-[2px] border border-[#8a8a8a] bg-white pl-0.5">
            <input id="drvname" defaultValue="Drv001" className="h-3 w-[36px] bg-[#0a246a] text-white" />
          </div>
        </Group>
        <Group title="预览方向" className="h-[27px] pt-[6px]">
          <label className="flex items-center gap-0.5">
            <span className="relative flex h-3 w-3">
              <input type="checkbox" defaultChecked className="h-3 w-3 appearance-none rounded-[2px] border border-[#43779f] bg-gradient-to-b from-[#e6f4fc] to-[#7fc2ec]" />
              <svg className="pointer-events-none absolute inset-0 h-3 w-3" viewBox="0 0 12 12"><path d="m2.500 5.500 2.500 3 5-6" fill="none" stroke="#123a66" strokeWidth="2" /></svg>
            </span>
            预览
          </label>
        </Group>
        <button type="button" aria-label="更少选项" className="flex h-3 w-full items-center justify-center border-b border-[#999] bg-gradient-to-b from-white to-[#dcdcdc]">
          <Svg size="h-1.5 w-8" box="0 0 32 6">
            <path d="m1 5 3-3.500L7 5m6 0 3-3.500L19 5m6 0 3-3.500L31 5" stroke="#222" strokeWidth="2" />
          </Svg>
        </button>
        <div className="mt-0.5 flex justify-end gap-1.5 border-t border-[#c2c2c2] pb-2 pr-[8px] pt-1">
          <div className="relative">
            <button type="button" className="flex h-[17px] w-[41px] items-center justify-center whitespace-nowrap rounded-[3px] border border-[#5c8a4a] bg-gradient-to-b from-[#8fc47c] to-[#93f27c]">&lt; 确定 &gt;</button>
            <Ring className="-left-0.5 -top-[3px] h-[25px] w-[45px]" />
          </div>
          <button type="button" className={action}>应用</button>
          <button type="button" className={action}>取消</button>
        </div>
      </div>
    </div>
  );
}

export default function App() {
  return (
    <div className="relative flex h-screen flex-col overflow-hidden bg-[#d8d8d8] font-['Noto_Sans','Noto_Sans_CJK_SC',sans-serif]">
      <TitleBar />
      <MenuBar />
      <MainToolbar />
      <SelectionBar />
      <CueLine />
      <div className="flex min-h-0 flex-1">
        <ModelView />
        <Navigator />
        <ResourceBar />
      </div>
      <DriveDialog />
      <p className="pointer-events-none absolute bottom-2.5 right-1 text-[15px] leading-none text-white/70">https://blog.csdn.net/Trouvaille_</p>
    </div>
  );
}
